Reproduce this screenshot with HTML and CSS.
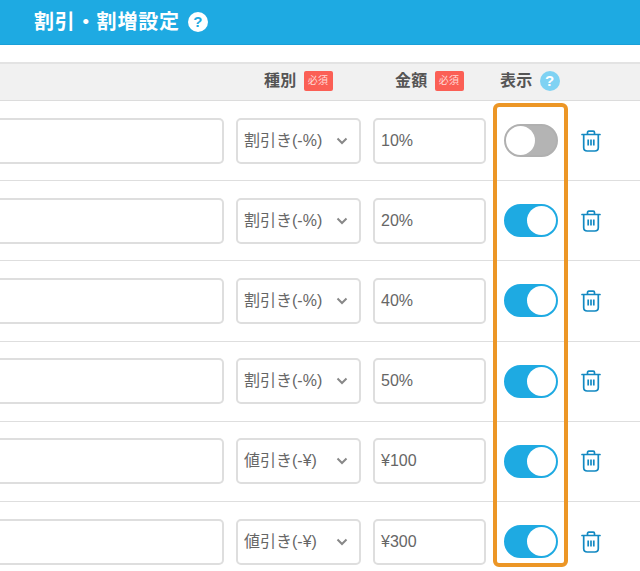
FILE: index.html
```html
<!DOCTYPE html>
<html lang="ja">
<head>
    <meta charset="UTF-8">
    <title>割引・割増設定</title>
    <link rel="stylesheet" href="styles.css">
</head>
<body>
    <svg class="icon-defs" width="0" height="0">
        <symbol id="trash" viewBox="0 0 20 24">
            <path d="M1 5.500H19M6.500 5V3.500C6.500 2.700 7 2.200 7.800 2.200H12.200C13 2.200 13.500 2.700 13.500 3.500V5" fill="none" stroke="currentColor" stroke-width="1.700" stroke-linecap="round"/>
            <path d="M2.700 6V18.500C2.700 20.800 4.200 22 6.200 22H13.800C15.800 22 17.300 20.800 17.300 18.500V6" fill="none" stroke="currentColor" stroke-width="1.700"/>
            <path d="M7.200 10.500V16.500M10 10.500V16.500M12.800 10.500V16.500" fill="none" stroke="currentColor" stroke-width="1.700"/>
        </symbol>
    </svg>

    <div class="app">
        <div class="title-bar">
            <h1>割引・割増設定</h1>
            <span class="help help-white">?</span>
        </div>

        <div class="table">
            <div class="grid table-head">
                <div></div>
                <div class="head-cell head-kind">種別<span class="required">必須</span></div>
                <div class="head-cell head-price">金額<span class="required">必須</span></div>
                <div class="head-cell head-show">表示<span class="help help-blue">?</span></div>
            </div>

            <div class="grid row">
                <div class="field name-field"></div>
                <div class="field select">割引き(-%)<svg class="chevron" width="12" height="8" viewBox="0 0 12 8"><path d="M1.500 1.500L6 6L10.500 1.500" fill="none" stroke="#888" stroke-width="2"/></svg></div>
                <div class="field">10%</div>
                <div class="toggle off"><span class="knob"></span></div>
                <svg class="trash"><use href="#trash"/></svg>
            </div>
            <div class="grid row">
                <div class="field name-field"></div>
                <div class="field select">割引き(-%)<svg class="chevron" width="12" height="8" viewBox="0 0 12 8"><path d="M1.500 1.500L6 6L10.500 1.500" fill="none" stroke="#888" stroke-width="2"/></svg></div>
                <div class="field">20%</div>
                <div class="toggle"><span class="knob"></span></div>
                <svg class="trash"><use href="#trash"/></svg>
            </div>
            <div class="grid row">
                <div class="field name-field"></div>
                <div class="field select">割引き(-%)<svg class="chevron" width="12" height="8" viewBox="0 0 12 8"><path d="M1.500 1.500L6 6L10.500 1.500" fill="none" stroke="#888" stroke-width="2"/></svg></div>
                <div class="field">40%</div>
                <div class="toggle"><span class="knob"></span></div>
                <svg class="trash"><use href="#trash"/></svg>
            </div>
            <div class="grid row">
                <div class="field name-field"></div>
                <div class="field select">割引き(-%)<svg class="chevron" width="12" height="8" viewBox="0 0 12 8"><path d="M1.500 1.500L6 6L10.500 1.500" fill="none" stroke="#888" stroke-width="2"/></svg></div>
                <div class="field">50%</div>
                <div class="toggle"><span class="knob"></span></div>
                <svg class="trash"><use href="#trash"/></svg>
            </div>
            <div class="grid row">
                <div class="field name-field"></div>
                <div class="field select">値引き(-¥)<svg class="chevron" width="12" height="8" viewBox="0 0 12 8"><path d="M1.500 1.500L6 6L10.500 1.500" fill="none" stroke="#888" stroke-width="2"/></svg></div>
                <div class="field">¥100</div>
                <div class="toggle"><span class="knob"></span></div>
                <svg class="trash"><use href="#trash"/></svg>
            </div>
            <div class="grid row">
                <div class="field name-field"></div>
                <div class="field select">値引き(-¥)<svg class="chevron" width="12" height="8" viewBox="0 0 12 8"><path d="M1.500 1.500L6 6L10.500 1.500" fill="none" stroke="#888" stroke-width="2"/></svg></div>
                <div class="field">¥300</div>
                <div class="toggle"><span class="knob"></span></div>
                <svg class="trash"><use href="#trash"/></svg>
            </div>
        </div>

        <div class="highlight"></div>
    </div>
</body>
</html>
```

FILE: styles.css
```css
* {
    margin: 0;
    padding: 0;
    box-sizing: border-box;
    font-family: "Liberation Sans", "Noto Sans CJK JP", sans-serif;
}

body {
    background: white;
    color: #555;
    overflow: hidden;
}

.icon-defs {
    position: absolute;
}

.app {
    position: relative;
    width: 640px;
    height: 571px;
    overflow: hidden;
}

.title-bar {
    display: flex;
    align-items: center;
    height: 45px;
    padding-left: 34px;
    padding-bottom: 1px;
    background: #1eaae2;
    border-bottom: 1px solid #1a9fd8;
}

.title-bar h1 {
    font-size: 20px;
    line-height: 24px;
    font-weight: 700;
    letter-spacing: 0.85px;
    color: white;
    margin-right: 8px;
}

.help {
    display: flex;
    flex-shrink: 0;
    align-items: center;
    justify-content: center;
    width: 20px;
    height: 20px;
    border-radius: 50%;
    font-size: 15px;
    font-weight: 700;
}

.help-white {
    background: white;
    color: #1eaae2;
}

.help-blue {
    background: #7fd2f3;
    color: white;
    margin-left: 7px;
}

.table {
    margin-top: 17px;
}

.grid {
    display: grid;
    grid-template-columns: 224px 125px 113px 54px 19px;
    column-gap: 12px;
    align-items: center;
}

.table-head {
    height: 39px;
    padding-bottom: 2px;
    background: #f1f1f1;
    border-top: 2px solid #e3e3e3;
    border-bottom: 1px solid #dcdcdc;
}

.head-cell {
    display: flex;
    align-items: center;
    font-size: 16px;
    line-height: 20px;
    font-weight: 700;
    letter-spacing: 0.3px;
    color: #555;
    white-space: nowrap;
}

.head-kind {
    padding-left: 28px;
}

.head-price {
    padding-left: 22px;
}

.head-show {
    margin-left: 2px;
}

.required {
    display: inline-block;
    width: 29px;
    height: 20px;
    margin-left: 7px;
    border-radius: 2px;
    background: #fb5f55;
    color: #ffd9d6;
    font-size: 10px;
    font-weight: 400;
    line-height: 20px;
    text-align: center;
}

.row {
    height: 80.2px;
    border-bottom: 1px solid #dedede;
}

.field {
    display: flex;
    align-items: center;
    height: 46px;
    padding-left: 6px;
    border: 2px solid #dedede;
    border-radius: 5px;
    background: white;
    font-size: 16px;
    line-height: 20px;
    color: #666;
}

.name-field {
    border-left: none;
    border-radius: 0 5px 5px 0;
}

.select {
    justify-content: space-between;
    padding-right: 11px;
}

.toggle {
    display: flex;
    justify-content: flex-end;
    width: 54px;
    height: 33px;
    margin-left: 6px;
    border: 2px solid #1eaae2;
    border-radius: 17px;
    background: #1eaae2;
}

.toggle.off {
    justify-content: flex-start;
    background: #b4b4b4;
    border-color: #b0b0b0;
}

.knob {
    width: 29px;
    height: 29px;
    border-radius: 50%;
    background: white;
}

.trash {
    width: 20px;
    height: 24px;
    margin-left: 17px;
    color: #1389c2;
}

.highlight {
    position: absolute;
    left: 493px;
    top: 103px;
    width: 75px;
    height: 464px;
    border: 4px solid #ec9626;
    border-radius: 6px;
    pointer-events: none;
}
```
